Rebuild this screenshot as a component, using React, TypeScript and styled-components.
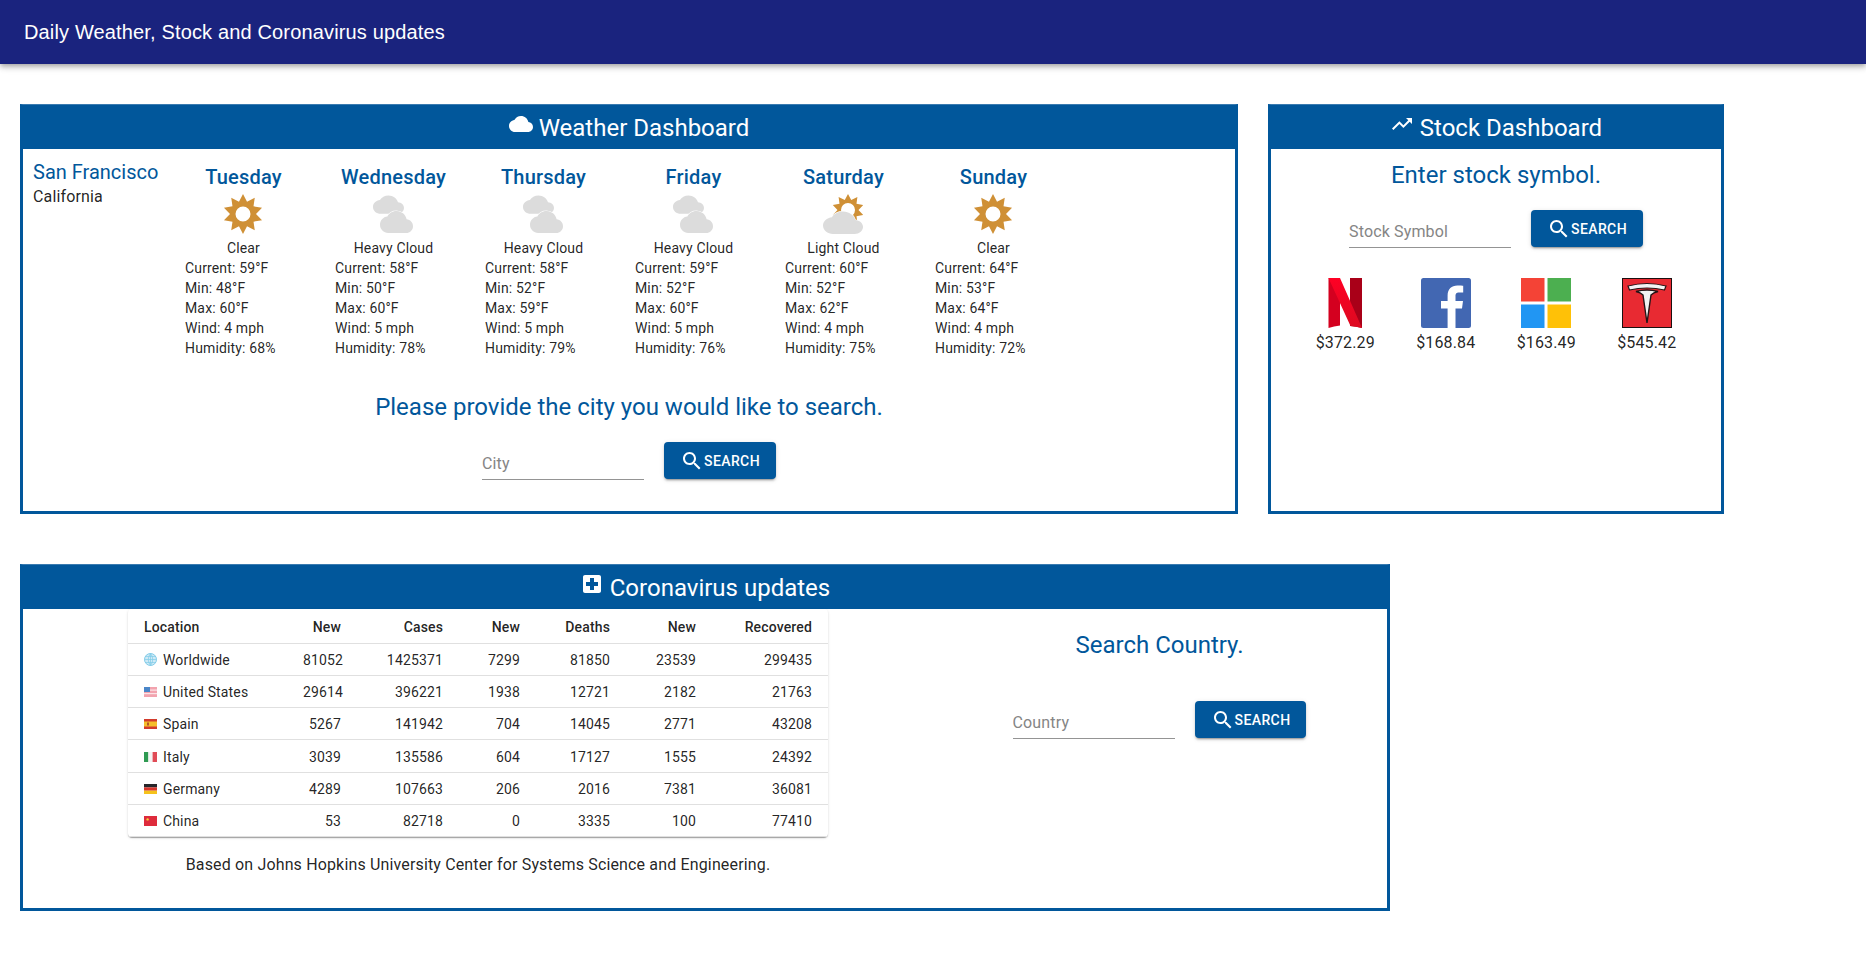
import React from "react";
import styled, { createGlobalStyle } from "styled-components";

const BLUE = "#01579b";

const days = [
  { name: "Tuesday", kind: "clear", label: "Clear", current: 59, min: 48, max: 60, wind: 4, humidity: 68 },
  { name: "Wednesday", kind: "heavy", label: "Heavy Cloud", current: 58, min: 50, max: 60, wind: 5, humidity: 78 },
  { name: "Thursday", kind: "heavy", label: "Heavy Cloud", current: 58, min: 52, max: 59, wind: 5, humidity: 79 },
  { name: "Friday", kind: "heavy", label: "Heavy Cloud", current: 59, min: 52, max: 60, wind: 5, humidity: 76 },
  { name: "Saturday", kind: "light", label: "Light Cloud", current: 60, min: 52, max: 62, wind: 4, humidity: 75 },
  { name: "Sunday", kind: "clear", label: "Clear", current: 64, min: 53, max: 64, wind: 4, humidity: 72 },
];

const stocks = [
  { logo: "netflix", price: "$372.29" },
  { logo: "facebook", price: "$168.84" },
  { logo: "microsoft", price: "$163.49" },
  { logo: "tesla", price: "$545.42" },
];

const rows = [
  { flag: "world", name: "Worldwide", cells: [81052, 1425371, 7299, 81850, 23539, 299435] },
  { flag: "us", name: "United States", cells: [29614, 396221, 1938, 12721, 2182, 21763] },
  { flag: "es", name: "Spain", cells: [5267, 141942, 704, 14045, 2771, 43208] },
  { flag: "it", name: "Italy", cells: [3039, 135586, 604, 17127, 1555, 24392] },
  { flag: "de", name: "Germany", cells: [4289, 107663, 206, 2016, 7381, 36081] },
  { flag: "cn", name: "China", cells: [53, 82718, 0, 3335, 100, 77410] },
];

const headings = ["Location", "New", "Cases", "New", "Deaths", "New", "Recovered"];
const colWidths = [159, 70, 102, 77, 90, 86, 116];

const CLOUD =
  "M19.35 10.04C18.67 6.59 15.64 4 12 4 9.11 4 6.6 5.64 5.35 8.04 2.34 8.36 0 10.91 0 14c0 3.31 2.69 6 6 6h13c2.76 0 5-2.24 5-5 0-2.64-2.05-4.78-4.65-4.96z";

function sunPath(cx: number, cy: number, outer: number, inner: number, hole: number) {
  let d = "";
  for (let i = 0; i < 20; i++) {
    const r = i % 2 === 0 ? outer : inner;
    const a = (i * Math.PI) / 10;
    const x = cx + r * Math.sin(a);
    const y = cy - r * Math.cos(a);
    d += `${i === 0 ? "M" : "L"}${x.toFixed(2)} ${y.toFixed(2)}`;
  }
  d += `ZM${cx - hole} ${cy}a${hole} ${hole} 0 1 0 ${hole * 2} 0a${hole} ${hole} 0 1 0 ${-hole * 2} 0Z`;
  return d;
}

function WeatherIcon({ kind }: { kind: string }) {
  return (
    <IconBox viewBox="0 0 40 40">
      {kind === "clear" && <path d={sunPath(20, 20, 20, 13, 7.5)} fill="#cf9036" fillRule="evenodd" />}
      {kind === "heavy" && (
        <>
          <path d={CLOUD} transform="translate(0 -3.2) scale(1.29 1.15)" fill="#dcdcdc" />
          <path
            d={CLOUD}
            transform="translate(7 11.5) scale(1.375)"
            fill="#dcdcdc"
            stroke="#fff"
            strokeWidth="0.9"
            paintOrder="stroke"
          />
        </>
      )}
      {kind === "light" && (
        <>
          <path d={sunPath(25, 16, 16, 10.5, 7)} fill="#cf9036" fillRule="evenodd" />
          <path
            d={CLOUD}
            transform="translate(0 12) scale(1.667 1.4)"
            fill="#dcdcdc"
            stroke="#fff"
            strokeWidth="0.9"
            paintOrder="stroke"
          />
        </>
      )}
    </IconBox>
  );
}

function Logo({ name }: { name: string }) {
  if (name === "netflix") {
    return (
      <LogoBox viewBox="0 0 50 50">
        <defs>
          <linearGradient id="nfx" x1="0" y1="0" x2="0" y2="1">
            <stop offset="0" stopColor="#ff0024" />
            <stop offset="1" stopColor="#dc0a20" />
          </linearGradient>
        </defs>
        <path d="M8.5 0H20V47.5Q14 48 8.5 50Z" fill="#d4001f" />
        <path d="M30 0H42V50Q36 48.5 30 48Z" fill="#a90018" />
        <path d="M8.5 0H20L42 50Q36 48.5 30.5 48Z" fill="url(#nfx)" />
      </LogoBox>
    );
  }
  if (name === "facebook") {
    return (
      <LogoBox viewBox="0 0 50 50">
        <rect width="50" height="50" rx="2.5" fill="#4267b2" />
        <path
          d="M34.5 50V30.6h6.5l1-7.6h-7.5v-4.8c0-2.2.6-3.7 3.7-3.7h4V7.7c-.7-.1-3.1-.3-5.8-.3-5.8 0-9.8 3.5-9.8 10V23H20v7.6h6.6V50Z"
          fill="#fff"
        />
      </LogoBox>
    );
  }
  if (name === "microsoft") {
    return (
      <LogoBox viewBox="0 0 50 50">
        <rect width="23.5" height="23.5" fill="#f44336" />
        <rect x="26.5" width="23.5" height="23.5" fill="#4caf50" />
        <rect y="26.5" width="23.5" height="23.5" fill="#2196f3" />
        <rect x="26.5" y="26.5" width="23.5" height="23.5" fill="#ffc107" />
      </LogoBox>
    );
  }
  return (
    <LogoBox viewBox="0 0 50 50">
      <rect x="0.5" y="0.5" width="49" height="49" fill="#e82a32" stroke="#1a1010" strokeWidth="1" />
      <path d="M6 8Q25 3 44 8L42.5 12Q25 8 7.5 12Z" fill="#f4f4f4" stroke="#241416" strokeWidth="1.2" />
      <path d="M14 13.5Q25 10.5 36 13.5Q31.5 14.5 29 17L25 45L21 17Q18.5 14.5 14 13.5Z" fill="#f2f2f2" stroke="#241416" strokeWidth="1.4" />
    </LogoBox>
  );
}

function Flag({ code }: { code: string }) {
  if (code === "world") {
    return (
      <FlagBox viewBox="0 0 13 13">
        <circle cx="6.5" cy="6.5" r="6" fill="#cfeaf6" stroke="#7fcbe8" />
        <path d="M6.5.5v12M.5 6.5h12M1.5 3.5h10M1.5 9.5h10M6.5.5Q2 6.5 6.5 12.5M6.5.5Q11 6.5 6.5 12.5" fill="none" stroke="#7fcbe8" strokeWidth="0.7" />
      </FlagBox>
    );
  }
  return (
    <FlagBox viewBox="0 0 13 10" $flag>
      {code === "us" && (
        <>
          <rect width="13" height="10" fill="#f2a3ae" />
          <rect y="2.5" width="13" height="1.2" fill="#fbe3e6" />
          <rect y="6" width="13" height="1.2" fill="#fbe3e6" />
          <rect width="6" height="5" fill="#4a86c8" />
        </>
      )}
      {code === "es" && (
        <>
          <rect width="13" height="10" fill="#d23b2c" />
          <rect y="2.5" width="13" height="5" fill="#f5bf2a" />
          <rect x="3" y="3.5" width="2" height="3" fill="#b5562a" />
        </>
      )}
      {code === "it" && (
        <>
          <rect width="4.4" height="10" fill="#2f9a52" />
          <rect x="4.4" width="4.2" height="10" fill="#f4f4f4" />
          <rect x="8.6" width="4.4" height="10" fill="#e04b56" />
        </>
      )}
      {code === "de" && (
        <>
          <rect width="13" height="3.4" fill="#26262a" />
          <rect y="3.4" width="13" height="3.3" fill="#d8352c" />
          <rect y="6.7" width="13" height="3.3" fill="#f5c21c" />
        </>
      )}
      {code === "cn" && (
        <>
          <rect width="13" height="10" fill="#de2b3c" />
          <circle cx="3.6" cy="3.4" r="1.2" fill="#f7d23a" />
        </>
      )}
    </FlagBox>
  );
}

function SearchIcon() {
  return (
    <ButtonIcon viewBox="0 0 24 24">
      <path d="M15.5 14h-.79l-.28-.27C15.41 12.59 16 11.11 16 9.5 16 5.91 13.09 3 9.5 3S3 5.91 3 9.5 5.91 16 9.5 16c1.61 0 3.09-.59 4.23-1.57l.27.28v.79l5 4.99L20.49 19l-4.99-5zm-6 0C7.01 14 5 11.99 5 9.5S7.01 5 9.5 5 14 7.01 14 9.5 11.99 14 9.5 14z" />
    </ButtonIcon>
  );
}

function SearchForm({ placeholder }: { placeholder: string }) {
  return (
    <SearchRow>
      <SearchInput placeholder={placeholder} />
      <SearchButton>
        <SearchIcon />
        Search
      </SearchButton>
    </SearchRow>
  );
}

export default function App() {
  return (
    <>
      <GlobalStyle />
      <AppBar>
        <AppTitle>Daily Weather, Stock and Coronavirus updates</AppTitle>
      </AppBar>
      <Main>
        <TopRow>
          <Panel $width={1218}>
            <PanelHeader>
              <HeaderIcon viewBox="0 0 24 24">
                <path d={CLOUD} />
              </HeaderIcon>{" "}
              Weather Dashboard
            </PanelHeader>
            <WeatherBody>
              <Forecast>
                <CityBlock>
                  <CityName>San Francisco</CityName>
                  <RegionName>California</RegionName>
                </CityBlock>
                {days.map((d) => (
                  <DayColumn key={d.name}>
                    <DayName>{d.name}</DayName>
                    <WeatherIcon kind={d.kind} />
                    <DayLabel>{d.label}</DayLabel>
                    <DayLine>Current: {d.current}°F</DayLine>
                    <DayLine>Min: {d.min}°F</DayLine>
                    <DayLine>Max: {d.max}°F</DayLine>
                    <DayLine>Wind: {d.wind} mph</DayLine>
                    <DayLine>Humidity: {d.humidity}%</DayLine>
                  </DayColumn>
                ))}
              </Forecast>
              <Prompt $top={33} $bottom={19}>
                Please provide the city you would like to search.
              </Prompt>
              <SearchForm placeholder="City" />
            </WeatherBody>
          </Panel>
          <Panel $width={456}>
            <PanelHeader>
              <HeaderIcon viewBox="0 0 24 24">
                <path d="M16 6l2.29 2.29-4.88 4.88-4-4L2 16.59 3.41 18l6-6 4 4 6.3-6.29L22 12V6z" />
              </HeaderIcon>{" "}
              Stock Dashboard
            </PanelHeader>
            <StockBody>
              <Prompt $top={0} $bottom={19}>
                Enter stock symbol.
              </Prompt>
              <SearchForm placeholder="Stock Symbol" />
              <StockGrid>
                {stocks.map((s) => (
                  <StockItem key={s.logo}>
                    <Logo name={s.logo} />
                    <Price>{s.price}</Price>
                  </StockItem>
                ))}
              </StockGrid>
            </StockBody>
          </Panel>
        </TopRow>
        <Panel $width={1370}>
          <PanelHeader>
            <HeaderIcon viewBox="0 0 24 24">
              <path d="M19 3H5c-1.1 0-1.99.9-1.99 2L3 19c0 1.1.9 2 2 2h14c1.1 0 2-.9 2-2V5c0-1.1-.9-2-2-2zm-1 11h-4v4h-4v-4H6v-4h4V6h4v4h4v4z" />
            </HeaderIcon>{" "}
            Coronavirus updates
          </PanelHeader>
          <CovidBody>
            <TableColumn>
              <TablePaper>
                <CovidTable>
                  <colgroup>
                    {colWidths.map((w, i) => (
                      <Col key={i} $width={w} />
                    ))}
                  </colgroup>
                  <thead>
                    <tr>
                      {headings.map((h, i) => (
                        <HeadCell key={i} $left={i === 0}>
                          {h}
                        </HeadCell>
                      ))}
                    </tr>
                  </thead>
                  <tbody>
                    {rows.map((r) => (
                      <tr key={r.name}>
                        <BodyCell $left>
                          <Flag code={r.flag} />
                          {r.name}
                        </BodyCell>
                        {r.cells.map((c, i) => (
                          <BodyCell key={i}>{c}</BodyCell>
                        ))}
                      </tr>
                    ))}
                  </tbody>
                </CovidTable>
              </TablePaper>
              <Footnote>Based on Johns Hopkins University Center for Systems Science and Engineering.</Footnote>
            </TableColumn>
            <CountryColumn>
              <Prompt $top={0} $bottom={40}>
                Search Country.
              </Prompt>
              <SearchForm placeholder="Country" />
            </CountryColumn>
          </CovidBody>
        </Panel>
      </Main>
    </>
  );
}

const GlobalStyle = createGlobalStyle`
  html, body {
    margin: 0;
    padding: 0;
    background: #fff;
    color: rgba(0, 0, 0, 0.87);
    font-family: Roboto, "Liberation Sans", sans-serif;
  }
`;

const AppBar = styled.header`
  height: 64px;
  display: flex;
  align-items: center;
  padding: 0 24px;
  background: #1a237e;
  box-shadow: 0 2px 4px -1px rgba(0, 0, 0, 0.2), 0 4px 5px 0 rgba(0, 0, 0, 0.14), 0 1px 10px 0 rgba(0, 0, 0, 0.12);
`;

const AppTitle = styled.h1`
  margin: 0;
  color: #fff;
  font-family: "Liberation Sans", Arial, sans-serif;
  font-size: 20px;
  font-weight: 400;
  letter-spacing: 0.15px;
`;

const Main = styled.main`
  padding: 40px 0 0 20px;
  display: flex;
  flex-direction: column;
  gap: 50px;
`;

const TopRow = styled.div`
  display: flex;
  gap: 30px;
  align-items: stretch;
`;

const Panel = styled.section<{ $width: number }>`
  width: ${(p) => p.$width}px;
  box-sizing: border-box;
  border: 3px solid ${BLUE};
  border-top: 1px solid #3a7bb0;
`;

const PanelHeader = styled.h2`
  margin: 0;
  height: 44px;
  padding-top: 2px;
  box-sizing: border-box;
  line-height: 42px;
  background: ${BLUE};
  color: #fff;
  font-size: 24px;
  font-weight: 400;
  text-align: center;
`;

const HeaderIcon = styled.svg`
  width: 24px;
  height: 24px;
  fill: #fff;
`;

const WeatherBody = styled.div`
  padding: 10px 0 31px;
`;

const Forecast = styled.div`
  display: flex;
  align-items: flex-start;
`;

const CityBlock = styled.div`
  width: 145px;
  padding-left: 10px;
  box-sizing: border-box;
  white-space: nowrap;
`;

const CityName = styled.div`
  color: ${BLUE};
  font-size: 20px;
  line-height: 26px;
`;

const RegionName = styled.div`
  font-size: 16px;
  line-height: 24px;
  letter-spacing: 0.15px;
`;

const DayColumn = styled.div`
  width: 150px;
  padding-top: 2px;
  font-size: 14px;
  line-height: 20px;
  letter-spacing: 0.15px;
`;

const DayName = styled.div`
  margin-bottom: 1px;
  padding-left: 1px;
  color: ${BLUE};
  font-size: 20px;
  font-weight: 500;
  line-height: 32px;
  letter-spacing: 0.2px;
  text-align: center;
`;

const IconBox = styled.svg`
  display: block;
  width: 40px;
  height: 40px;
  margin: 0 auto;
`;

const DayLabel = styled.div`
  margin-top: 4px;
  padding-left: 1px;
  text-align: center;
`;

const DayLine = styled.div`
  padding-left: 17px;
  white-space: nowrap;
`;

const Prompt = styled.div<{ $top: number; $bottom: number }>`
  margin: ${(p) => p.$top}px 0 ${(p) => p.$bottom}px;
  color: ${BLUE};
  font-size: 24px;
  line-height: 32px;
  text-align: center;
`;

const SearchRow = styled.div`
  display: flex;
  justify-content: center;
  align-items: flex-start;
  gap: 20px;
`;

const SearchInput = styled.input`
  width: 162px;
  height: 32px;
  margin-top: 6px;
  padding: 6px 0 7px;
  box-sizing: border-box;
  border: 0;
  border-bottom: 1px solid #949494;
  outline: none;
  background: transparent;
  font-family: Roboto, sans-serif;
  font-size: 16px;
  letter-spacing: 0.15px;

  &::placeholder {
    color: #858585;
    opacity: 1;
  }
`;

const SearchButton = styled.button`
  display: inline-flex;
  align-items: center;
  padding: 6.5px 16px 6px;
  border: 0;
  border-radius: 4px;
  background: ${BLUE};
  color: #fff;
  font-family: Roboto, sans-serif;
  font-size: 14px;
  font-weight: 500;
  line-height: 24.5px;
  letter-spacing: 0.4px;
  text-transform: uppercase;
  box-shadow: 0 3px 1px -2px rgba(0, 0, 0, 0.2), 0 2px 2px 0 rgba(0, 0, 0, 0.14), 0 1px 5px 0 rgba(0, 0, 0, 0.12);
`;

const ButtonIcon = styled.svg`
  width: 24px;
  height: 24px;
  fill: #fff;
`;

const StockBody = styled.div`
  padding-top: 10px;
`;

const StockGrid = styled.div`
  display: grid;
  grid-template-columns: repeat(4, 100.5px);
  justify-content: center;
  margin-top: 30px;
`;

const StockItem = styled.div`
  display: flex;
  flex-direction: column;
  align-items: center;
`;

const LogoBox = styled.svg`
  display: block;
  width: 50px;
  height: 50px;
`;

const Price = styled.div`
  margin-top: 3px;
  font-size: 16px;
  line-height: 24px;
  letter-spacing: 0.15px;
`;

const CovidBody = styled.div`
  display: flex;
  gap: 104px;
  padding-left: 105px;
`;

const TableColumn = styled.div`
  width: 700px;
`;

const TablePaper = styled.div`
  border-radius: 4px;
  box-shadow: 0 2px 1px -1px rgba(0, 0, 0, 0.2), 0 1px 1px 0 rgba(0, 0, 0, 0.14), 0 1px 3px 0 rgba(0, 0, 0, 0.12);
`;

const CovidTable = styled.table`
  width: 700px;
  table-layout: fixed;
  border-collapse: collapse;
  font-size: 14px;
  letter-spacing: 0.15px;
`;

const Col = styled.col<{ $width: number }>`
  width: ${(p) => p.$width}px;
`;

const HeadCell = styled.th<{ $left?: boolean }>`
  height: 34px;
  padding: 2px 16px 0;
  box-sizing: border-box;
  border-bottom: 1px solid #e0e0e0;
  font-weight: 500;
  text-align: ${(p) => (p.$left ? "left" : "right")};
`;

const BodyCell = styled.td<{ $left?: boolean }>`
  height: 32.33px;
  padding: 1px 16px 0;
  box-sizing: border-box;
  border-bottom: 1px solid #e0e0e0;
  white-space: nowrap;
  text-align: ${(p) => (p.$left ? "left" : "right")};
`;

const FlagBox = styled.svg<{ $flag?: boolean }>`
  width: 13px;
  height: ${(p) => (p.$flag ? 10 : 13)}px;
  margin-right: 6px;
  vertical-align: ${(p) => (p.$flag ? "0" : "-1px")};
`;

const Footnote = styled.p`
  margin: 16px 0 0;
  padding-bottom: 31px;
  font-size: 16px;
  line-height: 24px;
  letter-spacing: 0.15px;
  text-align: center;
`;

const CountryColumn = styled.div`
  flex: 1;
  padding-top: 20px;
`;
